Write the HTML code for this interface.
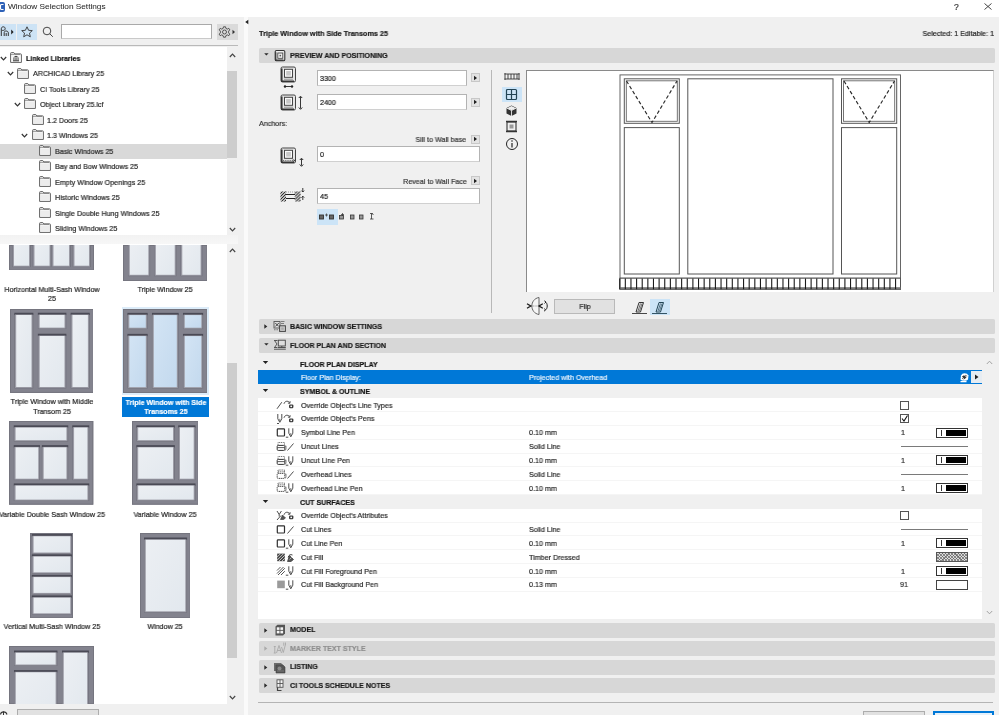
<!DOCTYPE html><html><head><meta charset="utf-8"><style>
html,body{margin:0;padding:0;} body{width:999px;height:715px;position:relative;overflow:hidden;background:#f0f0f0;font-family:"Liberation Sans", sans-serif;} div,svg{box-sizing:border-box;} div{-webkit-text-stroke:0.2px currentColor;will-change:transform;}
</style></head><body>
<div style="position:absolute;left:0px;top:0px;width:999px;height:17px;background:#fff"></div>
<div style="position:absolute;left:-6px;top:1.8px;width:10.5px;height:10px;background:#2f62b8;border-radius:2px"></div>
<svg style="position:absolute;left:0px;top:3px;" width="5" height="8" viewBox="0 0 5 8"><path d="M3.5 1.5H1.5Q0.5 1.5 0.5 2.5V5.5Q0.5 6.5 1.5 6.5H3.5" stroke="#fff" stroke-width="1.1" fill="none"/></svg>
<div style="position:absolute;left:7.5px;top:1.20px;line-height:12px;height:12px;white-space:nowrap;font-size:8.0px;font-weight:normal;color:#2a2a2a;transform:scaleX(1.03);transform-origin:0 50%;-webkit-text-stroke:0.05px #2a2a2a;">Window Selection Settings</div>
<div style="position:absolute;left:954.3px;top:1.20px;line-height:12px;height:12px;white-space:nowrap;font-size:8.5px;font-weight:normal;color:#333;">?</div>
<svg style="position:absolute;left:984px;top:3px;" width="8" height="7" viewBox="0 0 8 7"><path d="M0.5 0.5L7.5 6.5M7.5 0.5L0.5 6.5" stroke="#333" stroke-width="0.9"/></svg>
<div style="position:absolute;left:0px;top:24px;width:16.4px;height:15.6px;background:#cde3f5"></div>
<div style="position:absolute;left:17px;top:24px;width:20px;height:15.6px;background:#cde3f5"></div>
<svg style="position:absolute;left:0px;top:25px;" width="16" height="14" viewBox="0 0 16 14"><path d="M1.3 11V3.8C1.3 2.5 2.2 1.8 3.3 1.8C4.4 1.8 5.2 2.5 5.2 3.6C5.2 4.7 4.4 5.4 3.3 5.4H2.2M4.2 11V7.5C4.2 6.6 5 6 6 6C7.2 6 8.3 6.6 8.3 7.8V11M6.2 8V11" stroke="#333" stroke-width="1" fill="none"/><path d="M11.2 4.6L13.6 7L11.2 9.4Z" fill="#222"/></svg>
<svg style="position:absolute;left:20px;top:25px;" width="14" height="14" viewBox="0 0 14 14"><path d="M7 1.8L8.6 5.3L12.3 5.6L9.5 8.1L10.3 11.8L7 9.8L3.7 11.8L4.5 8.1L1.7 5.6L5.4 5.3Z" stroke="#333" stroke-width="0.9" fill="none" stroke-linejoin="round"/></svg>
<svg style="position:absolute;left:41px;top:25px;" width="14" height="14" viewBox="0 0 14 14"><circle cx="6" cy="6" r="3.8" stroke="#333" stroke-width="0.9" fill="none"/><path d="M8.8 8.8L11.8 11.8" stroke="#333" stroke-width="0.9"/></svg>
<div style="position:absolute;left:61px;top:24.2px;width:151px;height:15.4px;background:#fff;border:1px solid #a9a9a9;border-bottom-color:#c9c9c9"></div>
<div style="position:absolute;left:217px;top:24px;width:20.6px;height:15.5px;background:#dadada"></div>
<svg style="position:absolute;left:218px;top:25px;" width="19" height="14" viewBox="0 0 19 14"><g transform="translate(6.5,7)"><circle r="2" stroke="#333" stroke-width="0.8" fill="none"/><path d="M-1 -5.2L1 -5.2L1.4 -3.6L2.8 -2.9L4.3 -3.7L5.3 -2.1L4.1 -0.9L4.1 0.9L5.3 2.1L4.3 3.7L2.8 2.9L1.4 3.6L1 5.2L-1 5.2L-1.4 3.6L-2.8 2.9L-4.3 3.7L-5.3 2.1L-4.1 0.9L-4.1 -0.9L-5.3 -2.1L-4.3 -3.7L-2.8 -2.9L-1.4 -3.6Z" stroke="#333" stroke-width="0.8" fill="none"/></g><path d="M14.5 4.8L17 7L14.5 9.2Z" fill="#333"/></svg>
<div style="position:absolute;left:0px;top:44.6px;width:238px;height:1px;background:#b9b9b9"></div>
<div style="position:absolute;left:0px;top:47px;width:227px;height:188px;background:#fff"></div>
<div style="position:absolute;left:227px;top:47px;width:10.5px;height:188px;background:#f0f0f0"></div>
<div style="position:absolute;left:227.3px;top:70.5px;width:9.8px;height:87px;background:#cdcdcd"></div>
<svg style="position:absolute;left:229px;top:53px;" width="7" height="5" viewBox="0 0 7 5"><path d="M0.8 4L3.5 1.2L6.2 4" stroke="#444" stroke-width="1.2" fill="none"/></svg>
<svg style="position:absolute;left:229px;top:227px;" width="7" height="5" viewBox="0 0 7 5"><path d="M0.8 1L3.5 3.8L6.2 1" stroke="#444" stroke-width="1.2" fill="none"/></svg>
<div style="position:absolute;left:0px;top:143.8px;width:227px;height:15.1px;background:#d9d9d9"></div>
<svg style="position:absolute;left:-0.5px;top:55.8px;" width="7" height="5" viewBox="0 0 7 5"><path d="M0.8 1L3.5 3.8L6.2 1" stroke="#333" stroke-width="1.2" fill="none"/></svg>
<svg style="position:absolute;left:10.0px;top:52.099999999999994px;" width="12" height="11" viewBox="0 0 12 11"><path d="M0.6 10.4V1.4Q0.6 0.6 1.4 0.6H3.8L4.8 1.9H10.6Q11.4 1.9 11.4 2.7V10.4Z" stroke="#5a5a5a" stroke-width="0.95" fill="#f7f7f7"/><path d="M0.8 2.4H10" stroke="#5a5a5a" stroke-width="0.6"/><rect x="1.6" y="3.8" width="9" height="6" fill="#f7f7f7"/><path d="M3.2 5.2L6 3.8L8.8 5.2Z" fill="#333"/><path d="M3.8 5.6V8.2M5.2 5.6V8.2M6.8 5.6V8.2M8.2 5.6V8.2" stroke="#444" stroke-width="0.8"/><path d="M3 8.8H9" stroke="#333" stroke-width="1"/></svg>
<div style="position:absolute;left:25.7px;top:53.00px;line-height:12px;height:12px;white-space:nowrap;font-size:7.5px;font-weight:bold;color:#111;transform:scaleX(0.94);transform-origin:0 50%;">Linked Libraries</div>
<svg style="position:absolute;left:6.7px;top:71.25px;" width="7" height="5" viewBox="0 0 7 5"><path d="M0.8 1L3.5 3.8L6.2 1" stroke="#333" stroke-width="1.2" fill="none"/></svg>
<svg style="position:absolute;left:17.2px;top:67.55px;" width="12" height="11" viewBox="0 0 12 11"><path d="M0.6 10.4V1.4Q0.6 0.6 1.4 0.6H3.8L4.8 1.9H10.6Q11.4 1.9 11.4 2.7V10.4Z" stroke="#5a5a5a" stroke-width="0.95" fill="#f7f7f7"/><path d="M0.8 2.4H10" stroke="#5a5a5a" stroke-width="0.6"/><rect x="1.6" y="3.8" width="9" height="6" fill="#ececec"/></svg>
<div style="position:absolute;left:32.9px;top:68.45px;line-height:12px;height:12px;white-space:nowrap;font-size:7.5px;font-weight:normal;color:#262626;transform:scaleX(0.953);transform-origin:0 50%;">ARCHICAD Library 25</div>
<svg style="position:absolute;left:24.4px;top:82.99999999999999px;" width="12" height="11" viewBox="0 0 12 11"><path d="M0.6 10.4V1.4Q0.6 0.6 1.4 0.6H3.8L4.8 1.9H10.6Q11.4 1.9 11.4 2.7V10.4Z" stroke="#5a5a5a" stroke-width="0.95" fill="#f7f7f7"/><path d="M0.8 2.4H10" stroke="#5a5a5a" stroke-width="0.6"/><rect x="1.6" y="3.8" width="9" height="6" fill="#ececec"/></svg>
<div style="position:absolute;left:40.1px;top:83.90px;line-height:12px;height:12px;white-space:nowrap;font-size:7.5px;font-weight:normal;color:#262626;transform:scaleX(0.953);transform-origin:0 50%;">CI Tools Library 25</div>
<svg style="position:absolute;left:13.9px;top:102.14999999999999px;" width="7" height="5" viewBox="0 0 7 5"><path d="M0.8 1L3.5 3.8L6.2 1" stroke="#333" stroke-width="1.2" fill="none"/></svg>
<svg style="position:absolute;left:24.4px;top:98.44999999999999px;" width="12" height="11" viewBox="0 0 12 11"><path d="M0.6 10.4V1.4Q0.6 0.6 1.4 0.6H3.8L4.8 1.9H10.6Q11.4 1.9 11.4 2.7V10.4Z" stroke="#5a5a5a" stroke-width="0.95" fill="#f7f7f7"/><path d="M0.8 2.4H10" stroke="#5a5a5a" stroke-width="0.6"/><rect x="1.6" y="3.8" width="9" height="6" fill="#ececec"/></svg>
<div style="position:absolute;left:40.1px;top:99.35px;line-height:12px;height:12px;white-space:nowrap;font-size:7.5px;font-weight:normal;color:#262626;transform:scaleX(0.953);transform-origin:0 50%;">Object Library 25.lcf</div>
<svg style="position:absolute;left:31.6px;top:113.89999999999999px;" width="12" height="11" viewBox="0 0 12 11"><path d="M0.6 10.4V1.4Q0.6 0.6 1.4 0.6H3.8L4.8 1.9H10.6Q11.4 1.9 11.4 2.7V10.4Z" stroke="#5a5a5a" stroke-width="0.95" fill="#f7f7f7"/><path d="M0.8 2.4H10" stroke="#5a5a5a" stroke-width="0.6"/><rect x="1.6" y="3.8" width="9" height="6" fill="#ececec"/></svg>
<div style="position:absolute;left:47.3px;top:114.80px;line-height:12px;height:12px;white-space:nowrap;font-size:7.5px;font-weight:normal;color:#262626;transform:scaleX(0.953);transform-origin:0 50%;">1.2 Doors 25</div>
<svg style="position:absolute;left:21.1px;top:133.05px;" width="7" height="5" viewBox="0 0 7 5"><path d="M0.8 1L3.5 3.8L6.2 1" stroke="#333" stroke-width="1.2" fill="none"/></svg>
<svg style="position:absolute;left:31.6px;top:129.35000000000002px;" width="12" height="11" viewBox="0 0 12 11"><path d="M0.6 10.4V1.4Q0.6 0.6 1.4 0.6H3.8L4.8 1.9H10.6Q11.4 1.9 11.4 2.7V10.4Z" stroke="#5a5a5a" stroke-width="0.95" fill="#f7f7f7"/><path d="M0.8 2.4H10" stroke="#5a5a5a" stroke-width="0.6"/><rect x="1.6" y="3.8" width="9" height="6" fill="#ececec"/></svg>
<div style="position:absolute;left:47.3px;top:130.25px;line-height:12px;height:12px;white-space:nowrap;font-size:7.5px;font-weight:normal;color:#262626;transform:scaleX(0.953);transform-origin:0 50%;">1.3 Windows 25</div>
<svg style="position:absolute;left:38.8px;top:144.8px;" width="12" height="11" viewBox="0 0 12 11"><path d="M0.6 10.4V1.4Q0.6 0.6 1.4 0.6H3.8L4.8 1.9H10.6Q11.4 1.9 11.4 2.7V10.4Z" stroke="#5a5a5a" stroke-width="0.95" fill="#f7f7f7"/><path d="M0.8 2.4H10" stroke="#5a5a5a" stroke-width="0.6"/><rect x="1.6" y="3.8" width="9" height="6" fill="#ececec"/></svg>
<div style="position:absolute;left:54.5px;top:145.70px;line-height:12px;height:12px;white-space:nowrap;font-size:7.5px;font-weight:normal;color:#262626;transform:scaleX(0.953);transform-origin:0 50%;">Basic Windows 25</div>
<svg style="position:absolute;left:38.8px;top:160.25px;" width="12" height="11" viewBox="0 0 12 11"><path d="M0.6 10.4V1.4Q0.6 0.6 1.4 0.6H3.8L4.8 1.9H10.6Q11.4 1.9 11.4 2.7V10.4Z" stroke="#5a5a5a" stroke-width="0.95" fill="#f7f7f7"/><path d="M0.8 2.4H10" stroke="#5a5a5a" stroke-width="0.6"/><rect x="1.6" y="3.8" width="9" height="6" fill="#ececec"/></svg>
<div style="position:absolute;left:54.5px;top:161.15px;line-height:12px;height:12px;white-space:nowrap;font-size:7.5px;font-weight:normal;color:#262626;transform:scaleX(0.953);transform-origin:0 50%;">Bay and Bow Windows 25</div>
<svg style="position:absolute;left:38.8px;top:175.7px;" width="12" height="11" viewBox="0 0 12 11"><path d="M0.6 10.4V1.4Q0.6 0.6 1.4 0.6H3.8L4.8 1.9H10.6Q11.4 1.9 11.4 2.7V10.4Z" stroke="#5a5a5a" stroke-width="0.95" fill="#f7f7f7"/><path d="M0.8 2.4H10" stroke="#5a5a5a" stroke-width="0.6"/><rect x="1.6" y="3.8" width="9" height="6" fill="#ececec"/></svg>
<div style="position:absolute;left:54.5px;top:176.60px;line-height:12px;height:12px;white-space:nowrap;font-size:7.5px;font-weight:normal;color:#262626;transform:scaleX(0.953);transform-origin:0 50%;">Empty Window Openings 25</div>
<svg style="position:absolute;left:38.8px;top:191.14999999999998px;" width="12" height="11" viewBox="0 0 12 11"><path d="M0.6 10.4V1.4Q0.6 0.6 1.4 0.6H3.8L4.8 1.9H10.6Q11.4 1.9 11.4 2.7V10.4Z" stroke="#5a5a5a" stroke-width="0.95" fill="#f7f7f7"/><path d="M0.8 2.4H10" stroke="#5a5a5a" stroke-width="0.6"/><rect x="1.6" y="3.8" width="9" height="6" fill="#ececec"/></svg>
<div style="position:absolute;left:54.5px;top:192.05px;line-height:12px;height:12px;white-space:nowrap;font-size:7.5px;font-weight:normal;color:#262626;transform:scaleX(0.953);transform-origin:0 50%;">Historic Windows 25</div>
<svg style="position:absolute;left:38.8px;top:206.60000000000002px;" width="12" height="11" viewBox="0 0 12 11"><path d="M0.6 10.4V1.4Q0.6 0.6 1.4 0.6H3.8L4.8 1.9H10.6Q11.4 1.9 11.4 2.7V10.4Z" stroke="#5a5a5a" stroke-width="0.95" fill="#f7f7f7"/><path d="M0.8 2.4H10" stroke="#5a5a5a" stroke-width="0.6"/><rect x="1.6" y="3.8" width="9" height="6" fill="#ececec"/></svg>
<div style="position:absolute;left:54.5px;top:207.50px;line-height:12px;height:12px;white-space:nowrap;font-size:7.5px;font-weight:normal;color:#262626;transform:scaleX(0.953);transform-origin:0 50%;">Single Double Hung Windows 25</div>
<svg style="position:absolute;left:38.8px;top:222.05px;" width="12" height="11" viewBox="0 0 12 11"><path d="M0.6 10.4V1.4Q0.6 0.6 1.4 0.6H3.8L4.8 1.9H10.6Q11.4 1.9 11.4 2.7V10.4Z" stroke="#5a5a5a" stroke-width="0.95" fill="#f7f7f7"/><path d="M0.8 2.4H10" stroke="#5a5a5a" stroke-width="0.6"/><rect x="1.6" y="3.8" width="9" height="6" fill="#ececec"/></svg>
<div style="position:absolute;left:54.5px;top:222.95px;line-height:12px;height:12px;white-space:nowrap;font-size:7.5px;font-weight:normal;color:#262626;transform:scaleX(0.953);transform-origin:0 50%;">Sliding Windows 25</div>
<div style="position:absolute;left:0px;top:235px;width:238px;height:8px;background:#f0f0f0"></div>
<div style="position:absolute;left:0px;top:243px;width:227px;height:461px;background:#fff"></div>
<div style="position:absolute;left:227px;top:243px;width:10.5px;height:461px;background:#f0f0f0"></div>
<div style="position:absolute;left:227.3px;top:362.5px;width:9.8px;height:295px;background:#cdcdcd"></div>
<svg style="position:absolute;left:229px;top:248px;" width="7" height="5" viewBox="0 0 7 5"><path d="M0.8 4L3.5 1.2L6.2 4" stroke="#444" stroke-width="1.2" fill="none"/></svg>
<svg style="position:absolute;left:229px;top:695px;" width="7" height="5" viewBox="0 0 7 5"><path d="M0.8 1L3.5 3.8L6.2 1" stroke="#444" stroke-width="1.2" fill="none"/></svg>
<svg style="position:absolute;left:9px;top:244.5px;" width="85.1" height="25.7" viewBox="0 0 85.1 25.7"><defs><linearGradient id="gg9244" x1="0" y1="0" x2="1" y2="1"><stop offset="0" stop-color="#eceff3"/><stop offset="1" stop-color="#e2e8ee"/></linearGradient></defs><rect x="0" y="0" width="85.10" height="25.70" fill="#83838e"/><rect x="0.5" y="0.5" width="84.10" height="24.70" fill="none" stroke="#75757f" stroke-width="1"/><rect x="3.20" y="-6.70" width="18.60" height="28.80" fill="#72727d"/><rect x="3.20" y="-6.70" width="18.60" height="2.2" fill="#4a4a55"/><rect x="3.80" y="-5.00" width="17.20" height="26.60" fill="#9d9da7"/><rect x="5.00" y="-4.50" width="15.00" height="25.20" fill="url(#gg9244)"/><rect x="23.70" y="-6.70" width="18.60" height="28.80" fill="#72727d"/><rect x="23.70" y="-6.70" width="18.60" height="2.2" fill="#4a4a55"/><rect x="24.30" y="-5.00" width="17.20" height="26.60" fill="#9d9da7"/><rect x="25.50" y="-4.50" width="15.00" height="25.20" fill="url(#gg9244)"/><rect x="42.70" y="-6.70" width="19.10" height="28.80" fill="#72727d"/><rect x="42.70" y="-6.70" width="19.10" height="2.2" fill="#4a4a55"/><rect x="43.30" y="-5.00" width="17.70" height="26.60" fill="#9d9da7"/><rect x="44.50" y="-4.50" width="15.50" height="25.20" fill="url(#gg9244)"/><rect x="63.70" y="-6.70" width="18.10" height="28.80" fill="#72727d"/><rect x="63.70" y="-6.70" width="18.10" height="2.2" fill="#4a4a55"/><rect x="64.30" y="-5.00" width="16.70" height="26.60" fill="#9d9da7"/><rect x="65.50" y="-4.50" width="14.50" height="25.20" fill="url(#gg9244)"/></svg>
<svg style="position:absolute;left:122.7px;top:244.5px;" width="84.6" height="36.1" viewBox="0 0 84.6 36.1"><defs><linearGradient id="gg122244" x1="0" y1="0" x2="1" y2="1"><stop offset="0" stop-color="#eceff3"/><stop offset="1" stop-color="#e2e8ee"/></linearGradient></defs><rect x="0" y="0" width="84.60" height="36.10" fill="#83838e"/><rect x="0.5" y="0.5" width="83.60" height="35.10" fill="none" stroke="#75757f" stroke-width="1"/><rect x="5.00" y="-6.70" width="22.10" height="37.90" fill="#72727d"/><rect x="5.00" y="-6.70" width="22.10" height="2.2" fill="#4a4a55"/><rect x="5.60" y="-5.00" width="20.70" height="35.70" fill="#9d9da7"/><rect x="6.80" y="-4.50" width="18.50" height="34.30" fill="url(#gg122244)"/><rect x="31.10" y="-6.70" width="22.40" height="37.90" fill="#72727d"/><rect x="31.10" y="-6.70" width="22.40" height="2.2" fill="#4a4a55"/><rect x="31.70" y="-5.00" width="21.00" height="35.70" fill="#9d9da7"/><rect x="32.90" y="-4.50" width="18.80" height="34.30" fill="url(#gg122244)"/><rect x="57.50" y="-6.70" width="21.90" height="37.90" fill="#72727d"/><rect x="57.50" y="-6.70" width="21.90" height="2.2" fill="#4a4a55"/><rect x="58.10" y="-5.00" width="20.50" height="35.70" fill="#9d9da7"/><rect x="59.30" y="-4.50" width="18.30" height="34.30" fill="url(#gg122244)"/></svg>
<div style="position:absolute;left:-18.4px;top:283.50px;width:140px;line-height:12px;height:12px;white-space:nowrap;font-size:7.5px;font-weight:normal;color:#1f1f1f;text-align:center;transform:scaleX(0.953);transform-origin:50% 50%;">Horizontal Multi-Sash Window</div>
<div style="position:absolute;left:31.6px;top:292.70px;width:40px;line-height:12px;height:12px;white-space:nowrap;font-size:7.5px;font-weight:normal;color:#1f1f1f;text-align:center;transform:scaleX(0.953);transform-origin:50% 50%;">25</div>
<div style="position:absolute;left:105.0px;top:283.50px;width:120px;line-height:12px;height:12px;white-space:nowrap;font-size:7.5px;font-weight:normal;color:#1f1f1f;text-align:center;transform:scaleX(0.953);transform-origin:50% 50%;">Triple Window 25</div>
<svg style="position:absolute;left:9.5px;top:308.7px;" width="83.9" height="83.9" viewBox="0 0 83.9 83.9"><defs><linearGradient id="gg9308" x1="0" y1="0" x2="1" y2="1"><stop offset="0" stop-color="#eceff3"/><stop offset="1" stop-color="#e2e8ee"/></linearGradient></defs><rect x="0" y="0" width="83.90" height="83.90" fill="#83838e"/><rect x="0.5" y="0.5" width="82.90" height="82.90" fill="none" stroke="#75757f" stroke-width="1"/><rect x="4.40" y="3.80" width="18.90" height="75.60" fill="#72727d"/><rect x="4.40" y="3.80" width="18.90" height="2.2" fill="#4a4a55"/><rect x="5.00" y="5.50" width="17.50" height="73.40" fill="#9d9da7"/><rect x="6.20" y="6.00" width="15.30" height="72.00" fill="url(#gg9308)"/><rect x="27.90" y="3.80" width="28.40" height="16.20" fill="#72727d"/><rect x="27.90" y="3.80" width="28.40" height="2.2" fill="#4a4a55"/><rect x="28.50" y="5.50" width="27.00" height="14.00" fill="#9d9da7"/><rect x="29.70" y="6.00" width="24.80" height="12.60" fill="url(#gg9308)"/><rect x="27.90" y="24.80" width="28.40" height="54.60" fill="#72727d"/><rect x="27.90" y="24.80" width="28.40" height="2.2" fill="#4a4a55"/><rect x="28.50" y="26.50" width="27.00" height="52.40" fill="#9d9da7"/><rect x="29.70" y="27.00" width="24.80" height="51.00" fill="url(#gg9308)"/><rect x="60.70" y="3.80" width="19.00" height="75.60" fill="#72727d"/><rect x="60.70" y="3.80" width="19.00" height="2.2" fill="#4a4a55"/><rect x="61.30" y="5.50" width="17.60" height="73.40" fill="#9d9da7"/><rect x="62.50" y="6.00" width="15.40" height="72.00" fill="url(#gg9308)"/></svg>
<div style="position:absolute;left:122px;top:306.5px;width:87px;height:88px;background:#dcecf9"></div>
<svg style="position:absolute;left:122.7px;top:308.6px;" width="84.6" height="84.0" viewBox="0 0 84.6 84.0"><defs><linearGradient id="gg122308" x1="0" y1="0" x2="1" y2="1"><stop offset="0" stop-color="#d3e4f4"/><stop offset="1" stop-color="#c3d9ee"/></linearGradient></defs><rect x="0" y="0" width="84.60" height="84.00" fill="#83838e"/><rect x="0.5" y="0.5" width="83.60" height="83.00" fill="none" stroke="#75757f" stroke-width="1"/><rect x="4.50" y="3.90" width="20.10" height="16.20" fill="#72727d"/><rect x="4.50" y="3.90" width="20.10" height="2.2" fill="#4a4a55"/><rect x="5.10" y="5.60" width="18.70" height="14.00" fill="#9d9da7"/><rect x="6.30" y="6.10" width="16.50" height="12.60" fill="url(#gg122308)"/><rect x="4.50" y="24.90" width="20.10" height="54.60" fill="#72727d"/><rect x="4.50" y="24.90" width="20.10" height="2.2" fill="#4a4a55"/><rect x="5.10" y="26.60" width="18.70" height="52.40" fill="#9d9da7"/><rect x="6.30" y="27.10" width="16.50" height="51.00" fill="url(#gg122308)"/><rect x="29.00" y="3.90" width="26.60" height="75.60" fill="#72727d"/><rect x="29.00" y="3.90" width="26.60" height="2.2" fill="#4a4a55"/><rect x="29.60" y="5.60" width="25.20" height="73.40" fill="#9d9da7"/><rect x="30.80" y="6.10" width="23.00" height="72.00" fill="url(#gg122308)"/><rect x="60.00" y="3.90" width="20.10" height="16.20" fill="#72727d"/><rect x="60.00" y="3.90" width="20.10" height="2.2" fill="#4a4a55"/><rect x="60.60" y="5.60" width="18.70" height="14.00" fill="#9d9da7"/><rect x="61.80" y="6.10" width="16.50" height="12.60" fill="url(#gg122308)"/><rect x="60.00" y="24.90" width="20.10" height="54.60" fill="#72727d"/><rect x="60.00" y="24.90" width="20.10" height="2.2" fill="#4a4a55"/><rect x="60.60" y="26.60" width="18.70" height="52.40" fill="#9d9da7"/><rect x="61.80" y="27.10" width="16.50" height="51.00" fill="url(#gg122308)"/></svg>
<div style="position:absolute;left:-18.4px;top:395.90px;width:140px;line-height:12px;height:12px;white-space:nowrap;font-size:7.5px;font-weight:normal;color:#1f1f1f;text-align:center;transform:scaleX(0.953);transform-origin:50% 50%;">Triple Window with Middle</div>
<div style="position:absolute;left:11.600000000000001px;top:405.70px;width:80px;line-height:12px;height:12px;white-space:nowrap;font-size:7.5px;font-weight:normal;color:#1f1f1f;text-align:center;transform:scaleX(0.953);transform-origin:50% 50%;">Transom 25</div>
<div style="position:absolute;left:122px;top:396.8px;width:87px;height:19.6px;background:#0078d7"></div>
<div style="position:absolute;left:115.5px;top:396.70px;width:100px;line-height:12px;height:12px;white-space:nowrap;font-size:7.5px;font-weight:bold;color:#fff;text-align:center;transform:scaleX(0.94);transform-origin:50% 50%;">Triple Window with Side</div>
<div style="position:absolute;left:125.5px;top:405.50px;width:80px;line-height:12px;height:12px;white-space:nowrap;font-size:7.5px;font-weight:bold;color:#fff;text-align:center;transform:scaleX(0.94);transform-origin:50% 50%;">Transoms 25</div>
<svg style="position:absolute;left:9.3px;top:421.2px;" width="84.3" height="83.7" viewBox="0 0 84.3 83.7"><defs><linearGradient id="gg9421" x1="0" y1="0" x2="1" y2="1"><stop offset="0" stop-color="#eceff3"/><stop offset="1" stop-color="#e2e8ee"/></linearGradient></defs><rect x="0" y="0" width="84.30" height="83.70" fill="#83838e"/><rect x="0.5" y="0.5" width="83.30" height="82.70" fill="none" stroke="#75757f" stroke-width="1"/><rect x="4.80" y="4.40" width="54.40" height="16.10" fill="#72727d"/><rect x="4.80" y="4.40" width="54.40" height="2.2" fill="#4a4a55"/><rect x="5.40" y="6.10" width="53.00" height="13.90" fill="#9d9da7"/><rect x="6.60" y="6.60" width="50.80" height="12.50" fill="url(#gg9421)"/><rect x="4.80" y="24.20" width="26.20" height="34.90" fill="#72727d"/><rect x="4.80" y="24.20" width="26.20" height="2.2" fill="#4a4a55"/><rect x="5.40" y="25.90" width="24.80" height="32.70" fill="#9d9da7"/><rect x="6.60" y="26.40" width="22.60" height="31.30" fill="url(#gg9421)"/><rect x="32.90" y="24.20" width="26.30" height="34.90" fill="#72727d"/><rect x="32.90" y="24.20" width="26.30" height="2.2" fill="#4a4a55"/><rect x="33.50" y="25.90" width="24.90" height="32.70" fill="#9d9da7"/><rect x="34.70" y="26.40" width="22.70" height="31.30" fill="url(#gg9421)"/><rect x="63.30" y="4.40" width="16.90" height="54.70" fill="#72727d"/><rect x="63.30" y="4.40" width="16.90" height="2.2" fill="#4a4a55"/><rect x="63.90" y="6.10" width="15.50" height="52.50" fill="#9d9da7"/><rect x="65.10" y="6.60" width="13.30" height="51.10" fill="url(#gg9421)"/><rect x="4.80" y="62.50" width="75.40" height="17.50" fill="#72727d"/><rect x="4.80" y="62.50" width="75.40" height="2.2" fill="#4a4a55"/><rect x="5.40" y="64.20" width="74.00" height="15.30" fill="#9d9da7"/><rect x="6.60" y="64.70" width="71.80" height="13.90" fill="url(#gg9421)"/></svg>
<svg style="position:absolute;left:131.5px;top:421.2px;" width="66.7" height="83.7" viewBox="0 0 66.7 83.7"><defs><linearGradient id="gg131421" x1="0" y1="0" x2="1" y2="1"><stop offset="0" stop-color="#eceff3"/><stop offset="1" stop-color="#e2e8ee"/></linearGradient></defs><rect x="0" y="0" width="66.70" height="83.70" fill="#83838e"/><rect x="0.5" y="0.5" width="65.70" height="82.70" fill="none" stroke="#75757f" stroke-width="1"/><rect x="4.40" y="4.40" width="38.40" height="16.10" fill="#72727d"/><rect x="4.40" y="4.40" width="38.40" height="2.2" fill="#4a4a55"/><rect x="5.00" y="6.10" width="37.00" height="13.90" fill="#9d9da7"/><rect x="6.20" y="6.60" width="34.80" height="12.50" fill="url(#gg131421)"/><rect x="4.40" y="24.20" width="38.40" height="34.90" fill="#72727d"/><rect x="4.40" y="24.20" width="38.40" height="2.2" fill="#4a4a55"/><rect x="5.00" y="25.90" width="37.00" height="32.70" fill="#9d9da7"/><rect x="6.20" y="26.40" width="34.80" height="31.30" fill="url(#gg131421)"/><rect x="46.20" y="4.40" width="17.30" height="54.70" fill="#72727d"/><rect x="46.20" y="4.40" width="17.30" height="2.2" fill="#4a4a55"/><rect x="46.80" y="6.10" width="15.90" height="52.50" fill="#9d9da7"/><rect x="48.00" y="6.60" width="13.70" height="51.10" fill="url(#gg131421)"/><rect x="4.40" y="62.50" width="59.10" height="17.50" fill="#72727d"/><rect x="4.40" y="62.50" width="59.10" height="2.2" fill="#4a4a55"/><rect x="5.00" y="64.20" width="57.70" height="15.30" fill="#9d9da7"/><rect x="6.20" y="64.70" width="55.50" height="13.90" fill="url(#gg131421)"/></svg>
<div style="position:absolute;left:-18.4px;top:508.90px;width:140px;line-height:12px;height:12px;white-space:nowrap;font-size:7.5px;font-weight:normal;color:#1f1f1f;text-align:center;transform:scaleX(0.953);transform-origin:50% 50%;">Variable Double Sash Window 25</div>
<div style="position:absolute;left:105.0px;top:508.90px;width:120px;line-height:12px;height:12px;white-space:nowrap;font-size:7.5px;font-weight:normal;color:#1f1f1f;text-align:center;transform:scaleX(0.953);transform-origin:50% 50%;">Variable Window 25</div>
<svg style="position:absolute;left:30px;top:532.7px;" width="43" height="85.3" viewBox="0 0 43 85.3"><defs><linearGradient id="gg30532" x1="0" y1="0" x2="1" y2="1"><stop offset="0" stop-color="#eceff3"/><stop offset="1" stop-color="#e2e8ee"/></linearGradient></defs><rect x="0" y="0" width="43.00" height="85.30" fill="#83838e"/><rect x="0.5" y="0.5" width="42.00" height="84.30" fill="none" stroke="#75757f" stroke-width="1"/><rect x="1.80" y="1.10" width="40.20" height="19.80" fill="#72727d"/><rect x="1.80" y="1.10" width="40.20" height="2.2" fill="#4a4a55"/><rect x="2.40" y="2.80" width="38.80" height="17.60" fill="#9d9da7"/><rect x="3.60" y="3.30" width="36.60" height="16.20" fill="url(#gg30532)"/><rect x="1.80" y="21.40" width="40.20" height="19.30" fill="#72727d"/><rect x="1.80" y="21.40" width="40.20" height="2.2" fill="#4a4a55"/><rect x="2.40" y="23.10" width="38.80" height="17.10" fill="#9d9da7"/><rect x="3.60" y="23.60" width="36.60" height="15.70" fill="url(#gg30532)"/><rect x="1.80" y="41.90" width="40.20" height="19.40" fill="#72727d"/><rect x="1.80" y="41.90" width="40.20" height="2.2" fill="#4a4a55"/><rect x="2.40" y="43.60" width="38.80" height="17.20" fill="#9d9da7"/><rect x="3.60" y="44.10" width="36.60" height="15.80" fill="url(#gg30532)"/><rect x="1.80" y="62.50" width="40.20" height="19.20" fill="#72727d"/><rect x="1.80" y="62.50" width="40.20" height="2.2" fill="#4a4a55"/><rect x="2.40" y="64.20" width="38.80" height="17.00" fill="#9d9da7"/><rect x="3.60" y="64.70" width="36.60" height="15.60" fill="url(#gg30532)"/></svg>
<svg style="position:absolute;left:139.7px;top:532.7px;" width="50.7" height="85.3" viewBox="0 0 50.7 85.3"><defs><linearGradient id="gg139532" x1="0" y1="0" x2="1" y2="1"><stop offset="0" stop-color="#eceff3"/><stop offset="1" stop-color="#e2e8ee"/></linearGradient></defs><rect x="0" y="0" width="50.70" height="85.30" fill="#83838e"/><rect x="0.5" y="0.5" width="49.70" height="84.30" fill="none" stroke="#75757f" stroke-width="1"/><rect x="4.00" y="4.60" width="43.10" height="75.10" fill="#72727d"/><rect x="4.00" y="4.60" width="43.10" height="2.2" fill="#4a4a55"/><rect x="4.60" y="6.30" width="41.70" height="72.90" fill="#9d9da7"/><rect x="5.80" y="6.80" width="39.50" height="71.50" fill="url(#gg139532)"/></svg>
<div style="position:absolute;left:-18.4px;top:620.70px;width:140px;line-height:12px;height:12px;white-space:nowrap;font-size:7.5px;font-weight:normal;color:#1f1f1f;text-align:center;transform:scaleX(0.953);transform-origin:50% 50%;">Vertical Multi-Sash Window 25</div>
<div style="position:absolute;left:125.0px;top:620.70px;width:80px;line-height:12px;height:12px;white-space:nowrap;font-size:7.5px;font-weight:normal;color:#1f1f1f;text-align:center;transform:scaleX(0.953);transform-origin:50% 50%;">Window 25</div>
<svg style="position:absolute;left:9.2px;top:645.7px;" width="85.0" height="58.3" viewBox="0 0 85.0 58.3"><defs><linearGradient id="gg9645" x1="0" y1="0" x2="1" y2="1"><stop offset="0" stop-color="#eceff3"/><stop offset="1" stop-color="#e2e8ee"/></linearGradient></defs><rect x="0" y="0" width="85.00" height="58.30" fill="#83838e"/><rect x="0.5" y="0.5" width="84.00" height="57.30" fill="none" stroke="#75757f" stroke-width="1"/><rect x="5.00" y="4.60" width="43.40" height="15.30" fill="#72727d"/><rect x="5.00" y="4.60" width="43.40" height="2.2" fill="#4a4a55"/><rect x="5.60" y="6.30" width="42.00" height="13.10" fill="#9d9da7"/><rect x="6.80" y="6.80" width="39.80" height="11.70" fill="url(#gg9645)"/><rect x="5.00" y="24.10" width="43.40" height="51.60" fill="#72727d"/><rect x="5.00" y="24.10" width="43.40" height="2.2" fill="#4a4a55"/><rect x="5.60" y="25.80" width="42.00" height="49.40" fill="#9d9da7"/><rect x="6.80" y="26.30" width="39.80" height="48.00" fill="url(#gg9645)"/><rect x="53.00" y="4.60" width="26.90" height="71.10" fill="#72727d"/><rect x="53.00" y="4.60" width="26.90" height="2.2" fill="#4a4a55"/><rect x="53.60" y="6.30" width="25.50" height="68.90" fill="#9d9da7"/><rect x="54.80" y="6.80" width="23.30" height="67.50" fill="url(#gg9645)"/></svg>
<div style="position:absolute;left:0px;top:235px;width:238px;height:9px;background:linear-gradient(#f2f2f2,#f7f7f7)"></div>
<div style="position:absolute;left:0px;top:704px;width:238px;height:11px;background:#f0f0f0"></div>
<div style="position:absolute;left:17px;top:709px;width:82px;height:8px;background:#e1e1e1;border:1px solid #adadad"></div>
<svg style="position:absolute;left:0px;top:707px;" width="8" height="8" viewBox="0 0 8 8"><path d="M0.5 7.5C1 4 6 4 7 7.5" stroke="#333" stroke-width="1.1" fill="none"/><path d="M3.5 4.5V8" stroke="#333" stroke-width="1"/></svg>
<div style="position:absolute;left:248px;top:17px;width:751px;height:698px;background:#f0f0f0"></div>
<div style="position:absolute;left:244px;top:17px;width:4px;height:698px;background:#fafafa"></div>
<div style="position:absolute;left:259px;top:27.70px;line-height:12px;height:12px;white-space:nowrap;font-size:7.5px;font-weight:bold;color:#1a1a1a;transform:scaleX(0.965);transform-origin:0 50%;">Triple Window with Side Transoms 25</div>
<svg style="position:absolute;left:243.5px;top:19px;" width="5" height="6" viewBox="0 0 5 6"><path d="M4.3 0.8L1.2 3L4.3 5.2Z" fill="#222"/></svg>
<div style="position:absolute;right:4.5px;top:27.70px;line-height:12px;height:12px;white-space:nowrap;font-size:7.5px;font-weight:normal;color:#222;text-align:right;transform:scaleX(0.953);transform-origin:100% 50%;">Selected: 1 Editable: 1</div>
<div style="position:absolute;left:258.6px;top:48px;width:736px;height:15px;background:#d7d7d7;border-radius:1.5px"></div>
<svg style="position:absolute;left:263.5px;top:53.4px;" width="5" height="3" viewBox="0 0 5 3"><path d="M0.2 0.3H4.6L2.4 2.6Z" fill="#2a2a2a"/></svg>
<svg style="position:absolute;left:273px;top:49px;" width="14" height="13" viewBox="0 0 14 13"><path d="M3.5 1.5H10.5Q11.8 1.5 11.8 2.8V10.5Q11.8 11.8 10.5 11.8H3.5Q2.2 11.8 2.2 10.5V2.8Q2.2 1.5 3.5 1.5Z" stroke="#333" stroke-width="1.1" fill="#eee"/><path d="M2.8 3.2V11.2H10.5" stroke="#333" stroke-width="1.2" fill="none"/><rect x="4.8" y="4" width="5" height="5.3" stroke="#444" stroke-width="0.9" fill="#f4f4f4"/><rect x="6.5" y="5.8" width="1.6" height="1.6" fill="#555"/></svg>
<div style="position:absolute;left:290.3px;top:49.60px;line-height:12px;height:12px;white-space:nowrap;font-size:7.5px;font-weight:bold;color:#1a1a1a;transform:scaleX(0.94);transform-origin:0 50%;">PREVIEW AND POSITIONING</div>
<div style="position:absolute;left:258.6px;top:319.2px;width:736px;height:15px;background:#d7d7d7;border-radius:1.5px"></div>
<svg style="position:absolute;left:264px;top:324.2px;" width="4" height="5" viewBox="0 0 4 5"><path d="M0.3 0.2L3.3 2.5L0.3 4.8Z" fill="#2a2a2a"/></svg>
<svg style="position:absolute;left:273px;top:320.2px;" width="14" height="13" viewBox="0 0 14 13"><rect x="1" y="1.5" width="6" height="6.5" stroke="#555" stroke-width="0.9" fill="#ddd"/><path d="M2.3 3L5.8 6.5M5.8 3L2.3 6.5" stroke="#333" stroke-width="0.9"/><path d="M8 1.5H11.5M8 3.5H11" stroke="#666" stroke-width="0.8"/><path d="M1.5 9.8H2.3M3.7 9.8H4.5" stroke="#222" stroke-width="1.1"/><rect x="6.6" y="5.8" width="5.8" height="5.6" stroke="#444" stroke-width="1" fill="#d0d0d0"/><rect x="8.2" y="7.4" width="2.6" height="2.4" fill="#aaa"/></svg>
<div style="position:absolute;left:290.3px;top:320.80px;line-height:12px;height:12px;white-space:nowrap;font-size:7.5px;font-weight:bold;color:#1a1a1a;transform:scaleX(0.94);transform-origin:0 50%;">BASIC WINDOW SETTINGS</div>
<div style="position:absolute;left:258.6px;top:338px;width:736px;height:15px;background:#d7d7d7;border-radius:1.5px"></div>
<svg style="position:absolute;left:263.5px;top:343.4px;" width="5" height="3" viewBox="0 0 5 3"><path d="M0.2 0.3H4.6L2.4 2.6Z" fill="#2a2a2a"/></svg>
<svg style="position:absolute;left:273px;top:339px;" width="14" height="13" viewBox="0 0 14 13"><path d="M1 1.5H4.5M1.5 1.5L4 5L1.5 8.5M1 8.5H4.5" stroke="#555" stroke-width="1" fill="none"/><rect x="5.3" y="1.2" width="7" height="5.8" stroke="#444" stroke-width="0.9" fill="#ddd"/><path d="M8.8 7V8.6M5 8.6H12.8" stroke="#444" stroke-width="1"/><path d="M1 10.3H12.8" stroke="#777" stroke-width="1.3"/></svg>
<div style="position:absolute;left:290.3px;top:339.60px;line-height:12px;height:12px;white-space:nowrap;font-size:7.5px;font-weight:bold;color:#1a1a1a;transform:scaleX(0.94);transform-origin:0 50%;">FLOOR PLAN AND SECTION</div>
<div style="position:absolute;left:258.6px;top:622.7px;width:736px;height:15px;background:#d7d7d7;border-radius:1.5px"></div>
<svg style="position:absolute;left:264px;top:627.7px;" width="4" height="5" viewBox="0 0 4 5"><path d="M0.3 0.2L3.3 2.5L0.3 4.8Z" fill="#2a2a2a"/></svg>
<svg style="position:absolute;left:273px;top:623.7px;" width="14" height="13" viewBox="0 0 14 13"><path d="M2.5 2.5L4.5 0.8H12V9.5L10 11.5H2.5Z" fill="#555"/><rect x="3.8" y="3.3" width="2.7" height="2.6" fill="#f4f4f4"/><rect x="7.4" y="3.3" width="2.7" height="2.6" fill="#f4f4f4"/><rect x="3.8" y="6.8" width="2.7" height="2.6" fill="#f4f4f4"/><rect x="7.4" y="6.8" width="2.7" height="2.6" fill="#f4f4f4"/></svg>
<div style="position:absolute;left:290.3px;top:624.30px;line-height:12px;height:12px;white-space:nowrap;font-size:7.5px;font-weight:bold;color:#1a1a1a;transform:scaleX(0.94);transform-origin:0 50%;">MODEL</div>
<div style="position:absolute;left:258.6px;top:641.2px;width:736px;height:15px;background:#d7d7d7;border-radius:1.5px"></div>
<svg style="position:absolute;left:264px;top:646.2px;" width="4" height="5" viewBox="0 0 4 5"><path d="M0.3 0.2L3.3 2.5L0.3 4.8Z" fill="#aaa"/></svg>
<svg style="position:absolute;left:273px;top:642.2px;" width="14" height="13" viewBox="0 0 14 13"><path d="M0.8 4.5H2.8M1.8 4.5V11M0.8 11H2.8M3.5 11L6 3.5L8.5 11M4.3 8.5H7.7M8.5 5L10.3 10.5L12.2 3.5M10.8 0.5V3.8M12.5 0.5V3.5" stroke="#a8a8a8" stroke-width="0.9" fill="none"/></svg>
<div style="position:absolute;left:290.3px;top:642.80px;line-height:12px;height:12px;white-space:nowrap;font-size:7.5px;font-weight:bold;color:#8e8e8e;transform:scaleX(0.94);transform-origin:0 50%;">MARKER TEXT STYLE</div>
<div style="position:absolute;left:258.6px;top:659.6px;width:736px;height:15px;background:#d7d7d7;border-radius:1.5px"></div>
<svg style="position:absolute;left:264px;top:664.6px;" width="4" height="5" viewBox="0 0 4 5"><path d="M0.3 0.2L3.3 2.5L0.3 4.8Z" fill="#2a2a2a"/></svg>
<svg style="position:absolute;left:273px;top:660.6px;" width="14" height="13" viewBox="0 0 14 13"><path d="M1 2H8L9.5 3.5V10H1Z" fill="#6a6a6a"/><path d="M3 4H10L12 6V12H3Z" fill="#555" stroke="#444" stroke-width="0.6"/><circle cx="6.5" cy="7.5" r="2" fill="#888"/><path d="M4 10H11" stroke="#888" stroke-width="0.7"/></svg>
<div style="position:absolute;left:290.3px;top:661.20px;line-height:12px;height:12px;white-space:nowrap;font-size:7.5px;font-weight:bold;color:#1a1a1a;transform:scaleX(0.94);transform-origin:0 50%;">LISTING</div>
<div style="position:absolute;left:258.6px;top:678px;width:736px;height:15px;background:#d7d7d7;border-radius:1.5px"></div>
<svg style="position:absolute;left:264px;top:683px;" width="4" height="5" viewBox="0 0 4 5"><path d="M0.3 0.2L3.3 2.5L0.3 4.8Z" fill="#2a2a2a"/></svg>
<svg style="position:absolute;left:273px;top:679px;" width="14" height="13" viewBox="0 0 14 13"><rect x="4" y="0.8" width="6" height="7.5" stroke="#555" stroke-width="0.9" fill="#f4f4f4"/><path d="M4 4.5H10M7 0.8V8.3" stroke="#555" stroke-width="0.9"/><path d="M4.5 8.3V11.5H8.5" stroke="#444" stroke-width="1.2" fill="none"/></svg>
<div style="position:absolute;left:290.3px;top:679.60px;line-height:12px;height:12px;white-space:nowrap;font-size:7.5px;font-weight:bold;color:#1a1a1a;transform:scaleX(0.94);transform-origin:0 50%;">CI TOOLS SCHEDULE NOTES</div>
<div style="position:absolute;left:258.4px;top:701.6px;width:735px;height:1px;background:#b4b4b4"></div>
<div style="position:absolute;left:863px;top:711px;width:61.7px;height:8px;background:#e1e1e1;border:1px solid #adadad"></div>
<div style="position:absolute;left:932.7px;top:711px;width:61.3px;height:8px;background:#e5f1fb;border:2px solid #0078d7"></div>
<div style="position:absolute;left:317px;top:70px;width:149.60000000000002px;height:16px;background:#fff;border:1px solid #b3b3b3;border-bottom-color:#d0d0d0"></div>
<div style="position:absolute;left:319.5px;top:73.00px;line-height:12px;height:12px;white-space:nowrap;font-size:7.5px;font-weight:normal;color:#222;transform:scaleX(0.953);transform-origin:0 50%;">3300</div>
<div style="position:absolute;left:471px;top:73.3px;width:8.600000000000023px;height:9.299999999999997px;background:#e3e3e3;border:1px solid #c8c8c8"></div>
<svg style="position:absolute;left:473.3px;top:74.94999999999999px;" width="5" height="6" viewBox="0 0 5 6"><path d="M1 0.8L4 3L1 5.2Z" fill="#222"/></svg>
<div style="position:absolute;left:317px;top:94.3px;width:149.60000000000002px;height:15.900000000000006px;background:#fff;border:1px solid #b3b3b3;border-bottom-color:#d0d0d0"></div>
<div style="position:absolute;left:319.5px;top:97.25px;line-height:12px;height:12px;white-space:nowrap;font-size:7.5px;font-weight:normal;color:#222;transform:scaleX(0.953);transform-origin:0 50%;">2400</div>
<div style="position:absolute;left:471px;top:97.6px;width:8.600000000000023px;height:9.200000000000003px;background:#e3e3e3;border:1px solid #c8c8c8"></div>
<svg style="position:absolute;left:473.3px;top:99.19999999999999px;" width="5" height="6" viewBox="0 0 5 6"><path d="M1 0.8L4 3L1 5.2Z" fill="#222"/></svg>
<div style="position:absolute;left:258.5px;top:118.40px;line-height:12px;height:12px;white-space:nowrap;font-size:7.5px;font-weight:normal;color:#333;transform:scaleX(0.953);transform-origin:0 50%;">Anchors:</div>
<div style="position:absolute;right:532.5px;top:134.30px;line-height:12px;height:12px;white-space:nowrap;font-size:7.5px;font-weight:normal;color:#333;text-align:right;transform:scaleX(0.953);transform-origin:100% 50%;">Sill to Wall base</div>
<div style="position:absolute;left:471px;top:134.8px;width:8.800000000000011px;height:9.199999999999989px;background:#e3e3e3;border:1px solid #c8c8c8"></div>
<svg style="position:absolute;left:473.4px;top:136.4px;" width="5" height="6" viewBox="0 0 5 6"><path d="M1 0.8L4 3L1 5.2Z" fill="#222"/></svg>
<div style="position:absolute;left:317.2px;top:146.3px;width:163.40000000000003px;height:16.099999999999994px;background:#fff;border:1px solid #b3b3b3;border-bottom-color:#d0d0d0"></div>
<div style="position:absolute;left:319.7px;top:149.35px;line-height:12px;height:12px;white-space:nowrap;font-size:7.5px;font-weight:normal;color:#222;transform:scaleX(0.953);transform-origin:0 50%;">0</div>
<div style="position:absolute;right:532.5px;top:175.50px;line-height:12px;height:12px;white-space:nowrap;font-size:7.5px;font-weight:normal;color:#333;text-align:right;transform:scaleX(0.953);transform-origin:100% 50%;">Reveal to Wall Face</div>
<div style="position:absolute;left:471px;top:176px;width:8.800000000000011px;height:9.199999999999989px;background:#e3e3e3;border:1px solid #c8c8c8"></div>
<svg style="position:absolute;left:473.4px;top:177.6px;" width="5" height="6" viewBox="0 0 5 6"><path d="M1 0.8L4 3L1 5.2Z" fill="#222"/></svg>
<div style="position:absolute;left:317.2px;top:188px;width:163.40000000000003px;height:15.599999999999994px;background:#fff;border:1px solid #b3b3b3;border-bottom-color:#d0d0d0"></div>
<div style="position:absolute;left:319.7px;top:190.80px;line-height:12px;height:12px;white-space:nowrap;font-size:7.5px;font-weight:normal;color:#222;transform:scaleX(0.953);transform-origin:0 50%;">45</div>
<svg style="position:absolute;left:280px;top:66px;" width="24" height="23" viewBox="0 0 24 23"><path d="M2.5 1H14Q15.5 1 15.5 2.5V14.5Q15.5 16 14 16H2.5Q1 16 1 14.5V2.5Q1 1 2.5 1Z" stroke="#444" stroke-width="1" fill="#e6e6e6"/><path d="M1.8 2.5V15.2H14" stroke="#333" stroke-width="1.5" fill="none"/><rect x="4.5" y="3.3" width="8" height="8" stroke="#444" stroke-width="1" fill="#fafafa"/><rect x="6.2" y="5" width="4.6" height="4.6" fill="#c8c8c8"/><path d="M4 13.2H13" stroke="#888" stroke-width="0.9"/><path d="M5 20.5H12" stroke="#222" stroke-width="0.9"/><circle cx="5" cy="20.5" r="1.2" fill="#222"/><circle cx="12" cy="20.5" r="1.2" fill="#222"/></svg>
<svg style="position:absolute;left:280px;top:93.5px;" width="24" height="18" viewBox="0 0 24 18"><path d="M2.5 1H14Q15.5 1 15.5 2.5V14.5Q15.5 16 14 16H2.5Q1 16 1 14.5V2.5Q1 1 2.5 1Z" stroke="#444" stroke-width="1" fill="#e6e6e6"/><path d="M1.8 2.5V15.2H14" stroke="#333" stroke-width="1.5" fill="none"/><rect x="4.5" y="3.3" width="8" height="8" stroke="#444" stroke-width="1" fill="#fafafa"/><rect x="6.2" y="5" width="4.6" height="4.6" fill="#c8c8c8"/><path d="M4 13.2H13" stroke="#888" stroke-width="0.9"/><path d="M20.5 3V14.5" stroke="#222" stroke-width="0.9"/><path d="M18.8 4L20.5 2.2L22.2 4M18.8 13.5L20.5 15.3L22.2 13.5" stroke="#222" stroke-width="1" fill="none"/></svg>
<svg style="position:absolute;left:280px;top:147px;" width="25" height="20" viewBox="0 0 25 20"><path d="M2.5 1H14Q15.5 1 15.5 2.5V14.5Q15.5 16 14 16H2.5Q1 16 1 14.5V2.5Q1 1 2.5 1Z" stroke="#444" stroke-width="1" fill="#e6e6e6"/><path d="M1.8 2.5V15.2H14" stroke="#333" stroke-width="1.5" fill="none"/><rect x="4.5" y="3.3" width="8" height="8" stroke="#444" stroke-width="1" fill="#fafafa"/><rect x="6.2" y="5" width="4.6" height="4.6" fill="#c8c8c8"/><path d="M3 13.5H13" stroke="#555" stroke-width="0.8" stroke-dasharray="1 0.8"/><path d="M13 12.3L15.5 14.8M15.5 12.3L13 14.8" stroke="#222" stroke-width="0.8"/><path d="M21.5 12V18.5" stroke="#222" stroke-width="0.9"/><path d="M19.8 13L21.5 11.2L23.2 13M19.8 17.5L21.5 19.3L23.2 17.5" stroke="#222" stroke-width="1" fill="none"/></svg>
<svg style="position:absolute;left:279px;top:187px;" width="26" height="17" viewBox="0 0 26 17"><path d="M1.5 4.5H7V14.5H1.5Z" fill="#bbb"/><path d="M16 4.5H21.5V14.5H16Z" fill="#bbb"/><path d="M1.5 6.5L3.5 4.5M1.5 9.5L6.5 4.5M1.5 12.5L7 7M2.5 14.5L7 10M5.5 14.5L7 13M16 6.5L18 4.5M16 9.5L21 4.5M16 12.5L21.5 7M17 14.5L21.5 10M20 14.5L21.5 13" stroke="#222" stroke-width="0.9"/><path d="M7 7.5H16M7 11.5H16" stroke="#222" stroke-width="1.1"/><path d="M7 5H16" stroke="#777" stroke-width="0.7" stroke-dasharray="1 1"/><path d="M23.8 1V5M22.4 3.6L23.8 5L25.2 3.6M23.8 13V9.2M22.4 10.6L23.8 9.2L25.2 10.6" stroke="#222" stroke-width="0.9" fill="none"/></svg>
<div style="position:absolute;left:317px;top:208.6px;width:20.5px;height:15.5px;background:#cce4f7"></div>
<svg style="position:absolute;left:317px;top:209px;" width="62" height="15" viewBox="0 0 62 15"><rect x="2.5" y="6" width="4" height="4" stroke="#333" stroke-width="0.9" fill="#666"/><path d="M9.5 4.5V7.5M8 6H11" stroke="#333" stroke-width="0.7"/><rect x="12.5" y="6" width="4" height="4" stroke="#333" stroke-width="0.9" fill="#666"/><rect x="22.5" y="6.5" width="4" height="3.5" stroke="#333" stroke-width="0.8" fill="#999"/><path d="M25.5 4V7M24 5.5H27" stroke="#333" stroke-width="0.7"/><rect x="33.5" y="6" width="3.5" height="4" stroke="#333" stroke-width="0.8" fill="#999"/><rect x="42.5" y="6" width="3.5" height="4" stroke="#333" stroke-width="0.8" fill="#999"/><path d="M53 4.5L56 4.5M54.5 4.5V10M53 10H56.5M55.5 6L56.5 5" stroke="#333" stroke-width="0.8" fill="none"/></svg>
<div style="position:absolute;left:491.2px;top:70px;width:1px;height:243.4px;background:#b8b8b8"></div>
<svg style="position:absolute;left:503px;top:72px;" width="18" height="9" viewBox="0 0 18 9"><path d="M1.5 2H16.5M1.5 7H16.5M2 1V8M16 1V8M5 2V7M8 2V7M11 2V7M14 2V7" stroke="#333" stroke-width="0.9"/></svg>
<div style="position:absolute;left:501.5px;top:86.6px;width:20.3px;height:14.7px;background:#cce4f7"></div>
<svg style="position:absolute;left:505px;top:87.5px;" width="13" height="13" viewBox="0 0 13 13"><rect x="1.5" y="1.5" width="10" height="10" rx="1" stroke="#245" stroke-width="1.2" fill="none"/><path d="M6.5 1.5V11.5M1.5 6.5H11.5" stroke="#245" stroke-width="1.2"/></svg>
<svg style="position:absolute;left:505px;top:104px;" width="13" height="13" viewBox="0 0 13 13"><path d="M6.5 1.5L11.5 4V9.5L6.5 12L1.5 9.5V4Z" fill="#333"/><path d="M1.5 4L6.5 6.5L11.5 4M6.5 6.5V12" stroke="#fff" stroke-width="0.8" fill="none"/><path d="M2 4.2L6.5 2L11 4.2L6.5 6.3Z" fill="#eee"/></svg>
<svg style="position:absolute;left:505px;top:120px;" width="13" height="13" viewBox="0 0 13 13"><rect x="2" y="2" width="9" height="9" stroke="#333" stroke-width="1.1" fill="none"/><path d="M1 1.5H12M1 11.5H12" stroke="#333" stroke-width="1.3"/><rect x="4.5" y="4.5" width="4" height="4" fill="#999"/></svg>
<svg style="position:absolute;left:504.5px;top:136.5px;" width="14" height="14" viewBox="0 0 14 14"><circle cx="7" cy="7" r="5.5" stroke="#222" stroke-width="1" fill="none"/><path d="M7 6V10.5" stroke="#222" stroke-width="1.2"/><circle cx="7" cy="4" r="0.8" fill="#222"/></svg>
<div style="position:absolute;left:526px;top:70px;width:468px;height:222px;background:#fff;border-top:1px solid #8a8a8a;border-left:1px solid #8a8a8a;border-right:1px solid #d0d0d0"></div>
<svg style="position:absolute;left:526px;top:70px;" width="468" height="222" viewBox="0 0 468 222"><rect x="94.00" y="4.90" width="280.50" height="203.30" fill="none" stroke="#666" stroke-width="1"/><rect x="98.30" y="8.80" width="55.00" height="44.50" fill="none" stroke="#555" stroke-width="1"/><rect x="100.30" y="10.80" width="51.00" height="40.50" fill="none" stroke="#666" stroke-width="0.9"/><rect x="98.30" y="57.60" width="55.00" height="146.40" fill="none" stroke="#555" stroke-width="1"/><rect x="161.80" y="8.80" width="145.20" height="195.20" fill="none" stroke="#555" stroke-width="1"/><rect x="315.50" y="8.80" width="55.20" height="44.50" fill="none" stroke="#555" stroke-width="1"/><rect x="317.50" y="10.80" width="51.20" height="40.50" fill="none" stroke="#666" stroke-width="0.9"/><rect x="315.50" y="57.60" width="55.20" height="146.40" fill="none" stroke="#555" stroke-width="1"/><path d="M100.50 11.00 L126.00 52.50 L151.00 11.00" stroke="#2a2a2a" stroke-width="1.15" fill="none" stroke-dasharray="3.6 2.3"/><path d="M318.00 11.00 L343.20 52.50 L368.50 11.00" stroke="#2a2a2a" stroke-width="1.15" fill="none" stroke-dasharray="3.6 2.3"/><rect x="94" y="208.2" width="280.5" height="11.3" fill="#fff" stroke="#555" stroke-width="1"/><rect x="94" y="217.2" width="280.5" height="2.4" fill="#777"/><path d="M93.70 208.50 V219.30" stroke="#1a1a1a" stroke-width="1.1"/><path d="M99.33 208.50 V219.30" stroke="#1a1a1a" stroke-width="1.1"/><path d="M104.96 208.50 V219.30" stroke="#1a1a1a" stroke-width="1.1"/><path d="M110.59 208.50 V219.30" stroke="#1a1a1a" stroke-width="1.1"/><path d="M116.22 208.50 V219.30" stroke="#1a1a1a" stroke-width="1.1"/><path d="M121.85 208.50 V219.30" stroke="#1a1a1a" stroke-width="1.1"/><path d="M127.48 208.50 V219.30" stroke="#1a1a1a" stroke-width="1.1"/><path d="M133.11 208.50 V219.30" stroke="#1a1a1a" stroke-width="1.1"/><path d="M138.74 208.50 V219.30" stroke="#1a1a1a" stroke-width="1.1"/><path d="M144.37 208.50 V219.30" stroke="#1a1a1a" stroke-width="1.1"/><path d="M150.00 208.50 V219.30" stroke="#1a1a1a" stroke-width="1.1"/><path d="M155.63 208.50 V219.30" stroke="#1a1a1a" stroke-width="1.1"/><path d="M161.26 208.50 V219.30" stroke="#1a1a1a" stroke-width="1.1"/><path d="M166.89 208.50 V219.30" stroke="#1a1a1a" stroke-width="1.1"/><path d="M172.52 208.50 V219.30" stroke="#1a1a1a" stroke-width="1.1"/><path d="M178.15 208.50 V219.30" stroke="#1a1a1a" stroke-width="1.1"/><path d="M183.78 208.50 V219.30" stroke="#1a1a1a" stroke-width="1.1"/><path d="M189.41 208.50 V219.30" stroke="#1a1a1a" stroke-width="1.1"/><path d="M195.04 208.50 V219.30" stroke="#1a1a1a" stroke-width="1.1"/><path d="M200.67 208.50 V219.30" stroke="#1a1a1a" stroke-width="1.1"/><path d="M206.30 208.50 V219.30" stroke="#1a1a1a" stroke-width="1.1"/><path d="M211.93 208.50 V219.30" stroke="#1a1a1a" stroke-width="1.1"/><path d="M217.56 208.50 V219.30" stroke="#1a1a1a" stroke-width="1.1"/><path d="M223.19 208.50 V219.30" stroke="#1a1a1a" stroke-width="1.1"/><path d="M228.82 208.50 V219.30" stroke="#1a1a1a" stroke-width="1.1"/><path d="M234.45 208.50 V219.30" stroke="#1a1a1a" stroke-width="1.1"/><path d="M240.08 208.50 V219.30" stroke="#1a1a1a" stroke-width="1.1"/><path d="M245.71 208.50 V219.30" stroke="#1a1a1a" stroke-width="1.1"/><path d="M251.34 208.50 V219.30" stroke="#1a1a1a" stroke-width="1.1"/><path d="M256.97 208.50 V219.30" stroke="#1a1a1a" stroke-width="1.1"/><path d="M262.60 208.50 V219.30" stroke="#1a1a1a" stroke-width="1.1"/><path d="M268.23 208.50 V219.30" stroke="#1a1a1a" stroke-width="1.1"/><path d="M273.86 208.50 V219.30" stroke="#1a1a1a" stroke-width="1.1"/><path d="M279.49 208.50 V219.30" stroke="#1a1a1a" stroke-width="1.1"/><path d="M285.12 208.50 V219.30" stroke="#1a1a1a" stroke-width="1.1"/><path d="M290.75 208.50 V219.30" stroke="#1a1a1a" stroke-width="1.1"/><path d="M296.38 208.50 V219.30" stroke="#1a1a1a" stroke-width="1.1"/><path d="M302.01 208.50 V219.30" stroke="#1a1a1a" stroke-width="1.1"/><path d="M307.64 208.50 V219.30" stroke="#1a1a1a" stroke-width="1.1"/><path d="M313.27 208.50 V219.30" stroke="#1a1a1a" stroke-width="1.1"/><path d="M318.90 208.50 V219.30" stroke="#1a1a1a" stroke-width="1.1"/><path d="M324.53 208.50 V219.30" stroke="#1a1a1a" stroke-width="1.1"/><path d="M330.16 208.50 V219.30" stroke="#1a1a1a" stroke-width="1.1"/><path d="M335.79 208.50 V219.30" stroke="#1a1a1a" stroke-width="1.1"/><path d="M341.42 208.50 V219.30" stroke="#1a1a1a" stroke-width="1.1"/><path d="M347.05 208.50 V219.30" stroke="#1a1a1a" stroke-width="1.1"/><path d="M352.68 208.50 V219.30" stroke="#1a1a1a" stroke-width="1.1"/><path d="M358.31 208.50 V219.30" stroke="#1a1a1a" stroke-width="1.1"/><path d="M363.94 208.50 V219.30" stroke="#1a1a1a" stroke-width="1.1"/><path d="M369.57 208.50 V219.30" stroke="#1a1a1a" stroke-width="1.1"/></svg>
<svg style="position:absolute;left:526px;top:296px;" width="24" height="20" viewBox="0 0 24 20"><path d="M13 1.5C3.5 3 3.5 17 13 18.5Z" fill="#f6f6f6" stroke="#555" stroke-width="0.9"/><path d="M1 7.8L4.8 10L1 12.2M16.8 7.8L13 10L16.8 12.2" stroke="#1a1a1a" stroke-width="1.3" fill="none"/><path d="M5 10H13" stroke="#666" stroke-width="0.7" stroke-dasharray="1 0.8"/><path d="M19.5 6C21.8 7.3 21.8 12.7 19.5 14" stroke="#222" stroke-width="1" fill="none"/><path d="M18.3 4.8L20 6L18.5 7.5M18.5 12.5L19.5 14L18 15.2" stroke="#222" stroke-width="1" fill="none"/></svg>
<div style="position:absolute;left:554px;top:299px;width:61px;height:15px;background:#e1e1e1;border:1px solid #b9b9b9"></div>
<div style="position:absolute;left:564.5px;top:301.30px;width:40px;line-height:12px;height:12px;white-space:nowrap;font-size:7.5px;font-weight:normal;color:#222;text-align:center;transform:scaleX(0.953);transform-origin:50% 50%;">Flip</div>
<svg style="position:absolute;left:632px;top:301px;" width="16" height="14" viewBox="0 0 16 14"><path d="M4 11L7 1.5H11.5L8.5 11Z" fill="none" stroke="#333" stroke-width="1"/><path d="M6 10L8.5 2.5M7.5 10L10 2.5" stroke="#333" stroke-width="0.7"/><path d="M0 12.5H15" stroke="#333" stroke-width="0.9"/></svg>
<div style="position:absolute;left:650px;top:298.6px;width:19.7px;height:16.4px;background:#cce4f7"></div>
<svg style="position:absolute;left:652px;top:301px;" width="16" height="14" viewBox="0 0 16 14"><path d="M4 11L7 1.5H11.5L8.5 11Z" fill="none" stroke="#245" stroke-width="1"/><path d="M6 10L8.5 2.5M7.5 10L10 2.5" stroke="#245" stroke-width="0.7"/><path d="M0 12.5H15" stroke="#245" stroke-width="0.9"/></svg>
<div style="position:absolute;left:258.4px;top:353px;width:724.2px;height:265.5px;background:#fff"></div>
<div style="position:absolute;left:258.4px;top:353px;width:724.2px;height:3.5px;background:#f0f0f0"></div>
<div style="position:absolute;left:983px;top:353px;width:11.6px;height:265.5px;background:#f0f0f0"></div>
<svg style="position:absolute;left:985.5px;top:360px;" width="7" height="5" viewBox="0 0 7 5"><path d="M0.8 4L3.5 1.2L6.2 4" stroke="#999" stroke-width="0.9" fill="none"/></svg>
<svg style="position:absolute;left:985.5px;top:609.5px;" width="7" height="5" viewBox="0 0 7 5"><path d="M0.8 1L3.5 3.8L6.2 1" stroke="#999" stroke-width="0.9" fill="none"/></svg>
<div style="position:absolute;left:258.4px;top:356.5px;width:724.2px;height:13.83px;background:#f0f0f0"></div>
<svg style="position:absolute;left:262px;top:360.415px;" width="7" height="5" viewBox="0 0 7 5"><path d="M0.8 1L6.2 1L3.5 4Z" fill="#222"/></svg>
<div style="position:absolute;left:300.3px;top:358.72px;line-height:12px;height:12px;white-space:nowrap;font-size:7.5px;font-weight:bold;color:#111;transform:scaleX(0.94);transform-origin:0 50%;">FLOOR PLAN DISPLAY</div>
<div style="position:absolute;left:258.4px;top:370.33px;width:724.2px;height:13.83px;background:#0078d7"></div>
<div style="position:absolute;left:301.2px;top:371.94px;line-height:12px;height:12px;white-space:nowrap;font-size:7.5px;font-weight:normal;color:#eaf3fc;transform:scaleX(0.953);transform-origin:0 50%;">Floor Plan Display:</div>
<div style="position:absolute;left:528.5px;top:371.94px;line-height:12px;height:12px;white-space:nowrap;font-size:7.5px;font-weight:normal;color:#eaf3fc;transform:scaleX(0.953);transform-origin:0 50%;">Projected with Overhead</div>
<div style="position:absolute;left:970.6px;top:371.33px;width:11.4px;height:11.83px;background:#e6ecf2"></div>
<svg style="position:absolute;left:973.5px;top:374.245px;" width="6" height="6" viewBox="0 0 6 6"><path d="M1 0.5L4.5 3L1 5.5Z" fill="#222"/></svg>
<svg style="position:absolute;left:958.5px;top:371.745px;" width="11" height="11" viewBox="0 0 11 11"><path d="M2 3.5Q3 1.2 5.5 1.2Q8.5 1.2 9.5 3.5L9 7.5Q8 8.8 5.5 8.8Q2.5 8.8 1.5 7.5Z" fill="#fff"/><path d="M3 4.5L5 3.2L7.5 5.2L5.5 7.2Z" fill="#333"/><path d="M6 3.2L8.2 4.2M3 6.2L4.5 7.2" stroke="#555" stroke-width="0.8"/><path d="M1.5 9.6H7.5" stroke="#fff" stroke-width="1.3"/></svg>
<div style="position:absolute;left:258.4px;top:384.16px;width:724.2px;height:13.83px;background:#f0f0f0"></div>
<svg style="position:absolute;left:262px;top:388.07500000000005px;" width="7" height="5" viewBox="0 0 7 5"><path d="M0.8 1L6.2 1L3.5 4Z" fill="#222"/></svg>
<div style="position:absolute;left:300.3px;top:386.38px;line-height:12px;height:12px;white-space:nowrap;font-size:7.5px;font-weight:bold;color:#111;transform:scaleX(0.94);transform-origin:0 50%;">SYMBOL &amp; OUTLINE</div>
<div style="position:absolute;left:258.4px;top:411.02px;width:724.2px;height:1px;background:#f5f5f5"></div>
<svg style="position:absolute;left:276px;top:398.40500000000003px;" width="20" height="13" viewBox="0 0 20 13"><path d="M1 10.8L5.8 4.2" stroke="#3a3a3a" stroke-width="0.9" fill="none"/><path d="M8 5.8C8.6 3.2 11.6 2.2 13.6 4.6" stroke="#3a3a3a" stroke-width="0.9" fill="none"/><path d="M11.9 5.1L13.9 5.3L14.1 3.2" stroke="#3a3a3a" stroke-width="0.9" fill="none"/><rect x="13" y="6.4" width="4.4" height="3.9" rx="1.2" fill="#3a3a3a"/><circle cx="15.2" cy="8.3" r="0.9" fill="#fff"/></svg>
<div style="position:absolute;left:301.3px;top:399.61px;line-height:12px;height:12px;white-space:nowrap;font-size:7.5px;font-weight:normal;color:#2a2a2a;transform:scaleX(0.953);transform-origin:0 50%;">Override Object's Line Types</div>
<div style="position:absolute;left:900px;top:400.50500000000005px;width:9px;height:9px;background:#fff;border:1px solid #555"></div>
<div style="position:absolute;left:258.4px;top:424.84999999999997px;width:724.2px;height:1px;background:#f5f5f5"></div>
<svg style="position:absolute;left:276px;top:412.235px;" width="20" height="13" viewBox="0 0 20 13"><path d="M1.8 2V6.8L3.8 10.3L5.8 6.8V2" stroke="#3a3a3a" stroke-width="0.9" fill="none"/><path d="M1 11.5H3" stroke="#3a3a3a" stroke-width="0.9" fill="none"/><path d="M3.8 6.8V9" stroke="#3a3a3a" stroke-width="0.7"/><path d="M8 5.8C8.6 3.2 11.6 2.2 13.6 4.6" stroke="#3a3a3a" stroke-width="0.9" fill="none"/><path d="M11.9 5.1L13.9 5.3L14.1 3.2" stroke="#3a3a3a" stroke-width="0.9" fill="none"/><rect x="13" y="6.4" width="4.4" height="3.9" rx="1.2" fill="#3a3a3a"/><circle cx="15.2" cy="8.3" r="0.9" fill="#fff"/></svg>
<div style="position:absolute;left:301.3px;top:413.44px;line-height:12px;height:12px;white-space:nowrap;font-size:7.5px;font-weight:normal;color:#2a2a2a;transform:scaleX(0.953);transform-origin:0 50%;">Override Object's Pens</div>
<div style="position:absolute;left:900px;top:414.33500000000004px;width:9px;height:9px;background:#fff;border:1px solid #555"></div>
<svg style="position:absolute;left:900px;top:414.33500000000004px;" width="9" height="9" viewBox="0 0 9 9"><path d="M2 4.5L4 7L7.5 1.5" stroke="#111" stroke-width="1.1" fill="none"/></svg>
<div style="position:absolute;left:258.4px;top:438.67999999999995px;width:724.2px;height:1px;background:#f5f5f5"></div>
<svg style="position:absolute;left:276px;top:426.065px;" width="20" height="13" viewBox="0 0 20 13"><rect x="1.3" y="2.8" width="7.2" height="7.2" rx="0.7" stroke="#2f2f2f" stroke-width="1.2" fill="none"/><path d="M9.8 11.2H12.3" stroke="#3a3a3a" stroke-width="0.9" fill="none"/><path d="M12.8 2.3V7.2L14.8 10.8L16.8 7.2V2.3" stroke="#3a3a3a" stroke-width="0.9" fill="none"/><path d="M14.8 7V9.5" stroke="#3a3a3a" stroke-width="0.7"/></svg>
<div style="position:absolute;left:301.3px;top:427.26px;line-height:12px;height:12px;white-space:nowrap;font-size:7.5px;font-weight:normal;color:#2a2a2a;transform:scaleX(0.953);transform-origin:0 50%;">Symbol Line Pen</div>
<div style="position:absolute;left:528.5px;top:427.26px;line-height:12px;height:12px;white-space:nowrap;font-size:7.5px;font-weight:normal;color:#2a2a2a;transform:scaleX(0.953);transform-origin:0 50%;">0.10 mm</div>
<div style="position:absolute;left:900.5px;top:427.26px;line-height:12px;height:12px;white-space:nowrap;font-size:7.5px;font-weight:normal;color:#333;transform:scaleX(0.953);transform-origin:0 50%;">1</div>
<div style="position:absolute;left:936px;top:427.565px;width:32px;height:10.2px;background:#fff;border:1px solid #333"></div>
<div style="position:absolute;left:941px;top:429.565px;width:0.9px;height:6px;background:#333"></div>
<div style="position:absolute;left:946px;top:429.565px;width:19.5px;height:6.2px;background:#000"></div>
<div style="position:absolute;left:258.4px;top:452.51px;width:724.2px;height:1px;background:#f5f5f5"></div>
<svg style="position:absolute;left:276px;top:439.89500000000004px;" width="20" height="13" viewBox="0 0 20 13"><path d="M2 5V2.5H8.5V5" stroke="#555" stroke-width="0.8" stroke-dasharray="1.1 0.7" fill="none"/><rect x="1.2" y="5.4" width="7.6" height="5" rx="1" stroke="#333" stroke-width="1" fill="none"/><path d="M1.5 7.6H8.5" stroke="#333" stroke-width="0.8"/><path d="M8.8 6.5L10 5.8V9.5L8.8 10.4" stroke="#555" stroke-width="0.7" fill="none"/><path d="M11.5 10.5L17.5 3.5" stroke="#3a3a3a" stroke-width="0.9" fill="none"/></svg>
<div style="position:absolute;left:301.3px;top:441.10px;line-height:12px;height:12px;white-space:nowrap;font-size:7.5px;font-weight:normal;color:#2a2a2a;transform:scaleX(0.953);transform-origin:0 50%;">Uncut Lines</div>
<div style="position:absolute;left:528.5px;top:441.10px;line-height:12px;height:12px;white-space:nowrap;font-size:7.5px;font-weight:normal;color:#2a2a2a;transform:scaleX(0.953);transform-origin:0 50%;">Solid Line</div>
<div style="position:absolute;left:901px;top:445.89500000000004px;width:66.8px;height:1.2px;background:#7a7a7a"></div>
<div style="position:absolute;left:258.4px;top:466.34px;width:724.2px;height:1px;background:#f5f5f5"></div>
<svg style="position:absolute;left:276px;top:453.725px;" width="20" height="13" viewBox="0 0 20 13"><path d="M2 5V2.5H8.5V5" stroke="#555" stroke-width="0.8" stroke-dasharray="1.1 0.7" fill="none"/><rect x="1.2" y="5.4" width="7.6" height="5" rx="1" stroke="#333" stroke-width="1" fill="none"/><path d="M1.5 7.6H8.5" stroke="#333" stroke-width="0.8"/><path d="M8.8 6.5L10 5.8V9.5L8.8 10.4" stroke="#555" stroke-width="0.7" fill="none"/><path d="M9.8 11.2H12.3" stroke="#3a3a3a" stroke-width="0.9" fill="none"/><path d="M12.8 2.3V7.2L14.8 10.8L16.8 7.2V2.3" stroke="#3a3a3a" stroke-width="0.9" fill="none"/><path d="M14.8 7V9.5" stroke="#3a3a3a" stroke-width="0.7"/></svg>
<div style="position:absolute;left:301.3px;top:454.93px;line-height:12px;height:12px;white-space:nowrap;font-size:7.5px;font-weight:normal;color:#2a2a2a;transform:scaleX(0.953);transform-origin:0 50%;">Uncut Line Pen</div>
<div style="position:absolute;left:528.5px;top:454.93px;line-height:12px;height:12px;white-space:nowrap;font-size:7.5px;font-weight:normal;color:#2a2a2a;transform:scaleX(0.953);transform-origin:0 50%;">0.10 mm</div>
<div style="position:absolute;left:900.5px;top:454.93px;line-height:12px;height:12px;white-space:nowrap;font-size:7.5px;font-weight:normal;color:#333;transform:scaleX(0.953);transform-origin:0 50%;">1</div>
<div style="position:absolute;left:936px;top:455.225px;width:32px;height:10.2px;background:#fff;border:1px solid #333"></div>
<div style="position:absolute;left:941px;top:457.225px;width:0.9px;height:6px;background:#333"></div>
<div style="position:absolute;left:946px;top:457.225px;width:19.5px;height:6.2px;background:#000"></div>
<div style="position:absolute;left:258.4px;top:480.16999999999996px;width:724.2px;height:1px;background:#f5f5f5"></div>
<svg style="position:absolute;left:276px;top:467.555px;" width="20" height="13" viewBox="0 0 20 13"><path d="M2 5V2H8.5V5M2 3.8H8.5" stroke="#444" stroke-width="0.8" stroke-dasharray="1.1 0.7" fill="none"/><rect x="1.2" y="5.4" width="7.6" height="5" rx="1" stroke="#333" stroke-width="0.9" stroke-dasharray="1.3 0.6" fill="none"/><path d="M8.8 6.5L10 5.8V9.5L8.8 10.4" stroke="#555" stroke-width="0.7" fill="none"/><path d="M11.5 10.5L17.5 3.5" stroke="#3a3a3a" stroke-width="0.9" fill="none"/></svg>
<div style="position:absolute;left:301.3px;top:468.75px;line-height:12px;height:12px;white-space:nowrap;font-size:7.5px;font-weight:normal;color:#2a2a2a;transform:scaleX(0.953);transform-origin:0 50%;">Overhead Lines</div>
<div style="position:absolute;left:528.5px;top:468.75px;line-height:12px;height:12px;white-space:nowrap;font-size:7.5px;font-weight:normal;color:#2a2a2a;transform:scaleX(0.953);transform-origin:0 50%;">Solid Line</div>
<div style="position:absolute;left:901px;top:473.555px;width:66.8px;height:1.2px;background:#7a7a7a"></div>
<div style="position:absolute;left:258.4px;top:494.0px;width:724.2px;height:1px;background:#f5f5f5"></div>
<svg style="position:absolute;left:276px;top:481.38500000000005px;" width="20" height="13" viewBox="0 0 20 13"><path d="M2 5V2H8.5V5M2 3.8H8.5" stroke="#444" stroke-width="0.8" stroke-dasharray="1.1 0.7" fill="none"/><rect x="1.2" y="5.4" width="7.6" height="5" rx="1" stroke="#333" stroke-width="0.9" stroke-dasharray="1.3 0.6" fill="none"/><path d="M8.8 6.5L10 5.8V9.5L8.8 10.4" stroke="#555" stroke-width="0.7" fill="none"/><path d="M9.8 11.2H12.3" stroke="#3a3a3a" stroke-width="0.9" fill="none"/><path d="M12.8 2.3V7.2L14.8 10.8L16.8 7.2V2.3" stroke="#3a3a3a" stroke-width="0.9" fill="none"/><path d="M14.8 7V9.5" stroke="#3a3a3a" stroke-width="0.7"/></svg>
<div style="position:absolute;left:301.3px;top:482.59px;line-height:12px;height:12px;white-space:nowrap;font-size:7.5px;font-weight:normal;color:#2a2a2a;transform:scaleX(0.953);transform-origin:0 50%;">Overhead Line Pen</div>
<div style="position:absolute;left:528.5px;top:482.59px;line-height:12px;height:12px;white-space:nowrap;font-size:7.5px;font-weight:normal;color:#2a2a2a;transform:scaleX(0.953);transform-origin:0 50%;">0.10 mm</div>
<div style="position:absolute;left:900.5px;top:482.59px;line-height:12px;height:12px;white-space:nowrap;font-size:7.5px;font-weight:normal;color:#333;transform:scaleX(0.953);transform-origin:0 50%;">1</div>
<div style="position:absolute;left:936px;top:482.88500000000005px;width:32px;height:10.2px;background:#fff;border:1px solid #333"></div>
<div style="position:absolute;left:941px;top:484.88500000000005px;width:0.9px;height:6px;background:#333"></div>
<div style="position:absolute;left:946px;top:484.88500000000005px;width:19.5px;height:6.2px;background:#000"></div>
<div style="position:absolute;left:258.4px;top:494.8px;width:724.2px;height:13.83px;background:#f0f0f0"></div>
<svg style="position:absolute;left:262px;top:498.71500000000003px;" width="7" height="5" viewBox="0 0 7 5"><path d="M0.8 1L6.2 1L3.5 4Z" fill="#222"/></svg>
<div style="position:absolute;left:300.3px;top:497.02px;line-height:12px;height:12px;white-space:nowrap;font-size:7.5px;font-weight:bold;color:#111;transform:scaleX(0.94);transform-origin:0 50%;">CUT SURFACES</div>
<div style="position:absolute;left:258.4px;top:521.6600000000001px;width:724.2px;height:1px;background:#f5f5f5"></div>
<svg style="position:absolute;left:276px;top:509.04499999999996px;" width="20" height="13" viewBox="0 0 20 13"><path d="M1 2L3.2 5.5L5.4 2M3.2 5.5V7.5M1 11L5 6.5" stroke="#3a3a3a" stroke-width="0.9" fill="none"/><path d="M4.5 10.5L6.5 6L9.5 9L7.5 10.5Z" fill="#555" stroke="#333" stroke-width="0.6"/><path d="M8 5.8C8.6 3.2 11.6 2.2 13.6 4.6" stroke="#3a3a3a" stroke-width="0.9" fill="none"/><path d="M11.9 5.1L13.9 5.3L14.1 3.2" stroke="#3a3a3a" stroke-width="0.9" fill="none"/><rect x="13" y="6.4" width="4.4" height="3.9" rx="1.2" fill="#3a3a3a"/><circle cx="15.2" cy="8.3" r="0.9" fill="#fff"/></svg>
<div style="position:absolute;left:301.3px;top:510.24px;line-height:12px;height:12px;white-space:nowrap;font-size:7.5px;font-weight:normal;color:#2a2a2a;transform:scaleX(0.953);transform-origin:0 50%;">Override Object's Attributes</div>
<div style="position:absolute;left:900px;top:511.145px;width:9px;height:9px;background:#fff;border:1px solid #555"></div>
<div style="position:absolute;left:258.4px;top:535.4900000000001px;width:724.2px;height:1px;background:#f5f5f5"></div>
<svg style="position:absolute;left:276px;top:522.875px;" width="20" height="13" viewBox="0 0 20 13"><rect x="1.3" y="2.8" width="7.2" height="7.2" rx="0.7" stroke="#2f2f2f" stroke-width="1.2" fill="none"/><path d="M11.5 10.5L17.5 3.5" stroke="#3a3a3a" stroke-width="0.9" fill="none"/></svg>
<div style="position:absolute;left:301.3px;top:524.08px;line-height:12px;height:12px;white-space:nowrap;font-size:7.5px;font-weight:normal;color:#2a2a2a;transform:scaleX(0.953);transform-origin:0 50%;">Cut Lines</div>
<div style="position:absolute;left:528.5px;top:524.08px;line-height:12px;height:12px;white-space:nowrap;font-size:7.5px;font-weight:normal;color:#2a2a2a;transform:scaleX(0.953);transform-origin:0 50%;">Solid Line</div>
<div style="position:absolute;left:901px;top:528.875px;width:66.8px;height:1.2px;background:#7a7a7a"></div>
<div style="position:absolute;left:258.4px;top:549.32px;width:724.2px;height:1px;background:#f5f5f5"></div>
<svg style="position:absolute;left:276px;top:536.7049999999999px;" width="20" height="13" viewBox="0 0 20 13"><rect x="1.3" y="2.8" width="7.2" height="7.2" rx="0.7" stroke="#2f2f2f" stroke-width="1.2" fill="none"/><path d="M9.8 11.2H12.3" stroke="#3a3a3a" stroke-width="0.9" fill="none"/><path d="M12.8 2.3V7.2L14.8 10.8L16.8 7.2V2.3" stroke="#3a3a3a" stroke-width="0.9" fill="none"/><path d="M14.8 7V9.5" stroke="#3a3a3a" stroke-width="0.7"/></svg>
<div style="position:absolute;left:301.3px;top:537.90px;line-height:12px;height:12px;white-space:nowrap;font-size:7.5px;font-weight:normal;color:#2a2a2a;transform:scaleX(0.953);transform-origin:0 50%;">Cut Line Pen</div>
<div style="position:absolute;left:528.5px;top:537.90px;line-height:12px;height:12px;white-space:nowrap;font-size:7.5px;font-weight:normal;color:#2a2a2a;transform:scaleX(0.953);transform-origin:0 50%;">0.10 mm</div>
<div style="position:absolute;left:900.5px;top:537.90px;line-height:12px;height:12px;white-space:nowrap;font-size:7.5px;font-weight:normal;color:#333;transform:scaleX(0.953);transform-origin:0 50%;">1</div>
<div style="position:absolute;left:936px;top:538.2049999999999px;width:32px;height:10.2px;background:#fff;border:1px solid #333"></div>
<div style="position:absolute;left:941px;top:540.2049999999999px;width:0.9px;height:6px;background:#333"></div>
<div style="position:absolute;left:946px;top:540.2049999999999px;width:19.5px;height:6.2px;background:#000"></div>
<div style="position:absolute;left:258.4px;top:563.1500000000001px;width:724.2px;height:1px;background:#f5f5f5"></div>
<svg style="position:absolute;left:276px;top:550.535px;" width="20" height="13" viewBox="0 0 20 13"><rect x="1.2" y="2.6" width="7.6" height="7.6" fill="#444"/><path d="M1.2 6L4.6 2.6M1.2 9L7.6 2.6M2.8 10.2L8.8 4.2M5.8 10.2L8.8 7.2" stroke="#e8e8e8" stroke-width="0.8"/><path d="M11.5 10.5L13.5 4.5L17.5 8.5L15 10.5Z" fill="#555" stroke="#333" stroke-width="0.7"/><path d="M12.2 6.5C12.5 4 14.5 3 16.5 4" stroke="#333" stroke-width="0.9" fill="none"/><path d="M13.5 8.5L15.5 6.5" stroke="#ddd" stroke-width="0.7"/></svg>
<div style="position:absolute;left:301.3px;top:551.74px;line-height:12px;height:12px;white-space:nowrap;font-size:7.5px;font-weight:normal;color:#2a2a2a;transform:scaleX(0.953);transform-origin:0 50%;">Cut Fill</div>
<div style="position:absolute;left:528.5px;top:551.74px;line-height:12px;height:12px;white-space:nowrap;font-size:7.5px;font-weight:normal;color:#2a2a2a;transform:scaleX(0.953);transform-origin:0 50%;">Timber Dressed</div>
<div style="position:absolute;left:936px;top:552.035px;width:32px;height:10.2px;background:repeating-linear-gradient(45deg,rgba(90,90,90,0.7) 0 0.8px,transparent 0.8px 2.2px),repeating-linear-gradient(-45deg,rgba(90,90,90,0.7) 0 0.8px,#dcdcdc 0.8px 2.2px);border:1px solid #555"></div>
<div style="position:absolute;left:258.4px;top:576.9800000000001px;width:724.2px;height:1px;background:#f5f5f5"></div>
<svg style="position:absolute;left:276px;top:564.365px;" width="20" height="13" viewBox="0 0 20 13"><path d="M1 6.5L4.5 3M1 9.5L7.5 3M2 11L8.8 4.2M5 11L8.8 7.2" stroke="#444" stroke-width="0.9"/><path d="M9.8 11.2H12.3" stroke="#3a3a3a" stroke-width="0.9" fill="none"/><path d="M12.8 2.3V7.2L14.8 10.8L16.8 7.2V2.3" stroke="#3a3a3a" stroke-width="0.9" fill="none"/><path d="M14.8 7V9.5" stroke="#3a3a3a" stroke-width="0.7"/></svg>
<div style="position:absolute;left:301.3px;top:565.57px;line-height:12px;height:12px;white-space:nowrap;font-size:7.5px;font-weight:normal;color:#2a2a2a;transform:scaleX(0.953);transform-origin:0 50%;">Cut Fill Foreground Pen</div>
<div style="position:absolute;left:528.5px;top:565.57px;line-height:12px;height:12px;white-space:nowrap;font-size:7.5px;font-weight:normal;color:#2a2a2a;transform:scaleX(0.953);transform-origin:0 50%;">0.10 mm</div>
<div style="position:absolute;left:900.5px;top:565.57px;line-height:12px;height:12px;white-space:nowrap;font-size:7.5px;font-weight:normal;color:#333;transform:scaleX(0.953);transform-origin:0 50%;">1</div>
<div style="position:absolute;left:936px;top:565.865px;width:32px;height:10.2px;background:#fff;border:1px solid #333"></div>
<div style="position:absolute;left:941px;top:567.865px;width:0.9px;height:6px;background:#333"></div>
<div style="position:absolute;left:946px;top:567.865px;width:19.5px;height:6.2px;background:#000"></div>
<div style="position:absolute;left:258.4px;top:590.8100000000001px;width:724.2px;height:1px;background:#f5f5f5"></div>
<svg style="position:absolute;left:276px;top:578.1949999999999px;" width="20" height="13" viewBox="0 0 20 13"><rect x="1.2" y="2.6" width="7.6" height="7.6" fill="#9a9a9a"/><path d="M9.8 11.2H12.3" stroke="#3a3a3a" stroke-width="0.9" fill="none"/><path d="M12.8 2.3V7.2L14.8 10.8L16.8 7.2V2.3" stroke="#3a3a3a" stroke-width="0.9" fill="none"/><path d="M14.8 7V9.5" stroke="#3a3a3a" stroke-width="0.7"/></svg>
<div style="position:absolute;left:301.3px;top:579.39px;line-height:12px;height:12px;white-space:nowrap;font-size:7.5px;font-weight:normal;color:#2a2a2a;transform:scaleX(0.953);transform-origin:0 50%;">Cut Fill Background Pen</div>
<div style="position:absolute;left:528.5px;top:579.39px;line-height:12px;height:12px;white-space:nowrap;font-size:7.5px;font-weight:normal;color:#2a2a2a;transform:scaleX(0.953);transform-origin:0 50%;">0.13 mm</div>
<div style="position:absolute;left:900.2px;top:579.39px;line-height:12px;height:12px;white-space:nowrap;font-size:7.5px;font-weight:normal;color:#333;transform:scaleX(0.953);transform-origin:0 50%;">91</div>
<div style="position:absolute;left:936px;top:579.6949999999999px;width:32px;height:10.2px;background:#fff;border:1px solid #444"></div>
</body></html>
